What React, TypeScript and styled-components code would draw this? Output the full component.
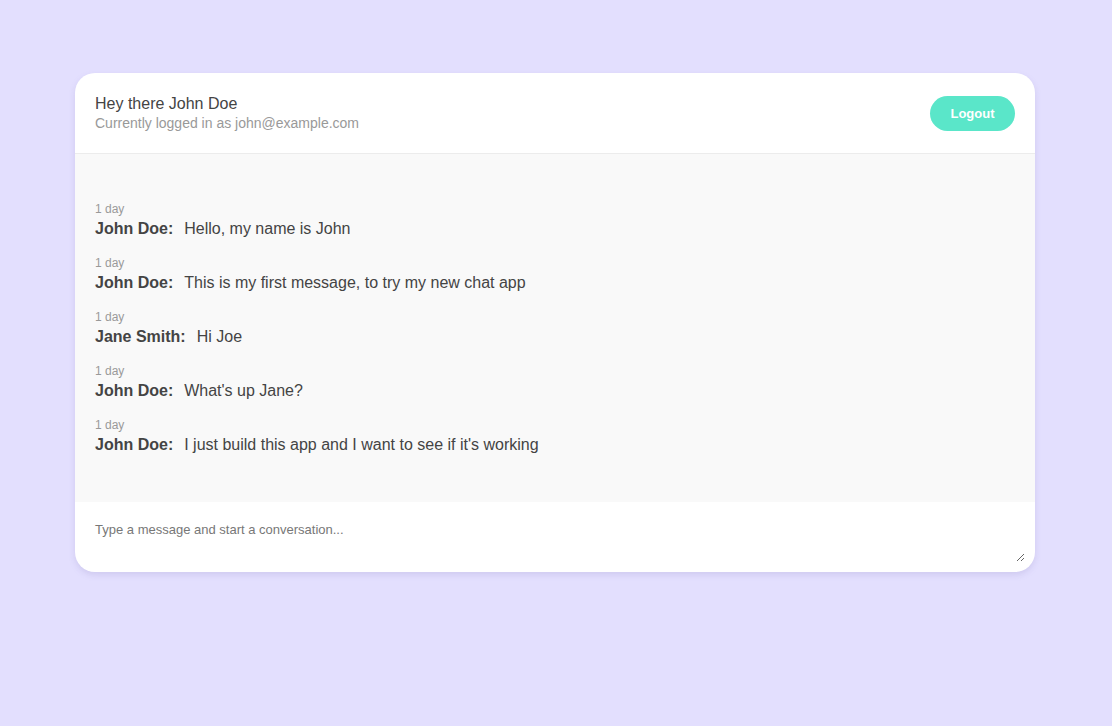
import React from "react";
import styled, { createGlobalStyle } from "styled-components";

const GlobalStyle = createGlobalStyle`
  html, body { margin: 0; padding: 0; }
  body {
    background: #e3dffe;
    font-family: "Liberation Sans", Arial, sans-serif;
    color: #444;
  }
`;

const Page = styled.div`
  min-height: 726px;
  padding: 73px 77px 0 75px;
  box-sizing: border-box;
  display: flex;
  justify-content: center;
  align-items: flex-start;
`;

const Card = styled.div`
  width: 960px;
  background: #fff;
  border-radius: 20px;
  overflow: hidden;
  box-shadow: 0 3px 6px rgba(120, 110, 180, 0.18);
  display: flex;
  flex-direction: column;
`;

const Header = styled.div`
  height: 80px;
  box-sizing: content-box;
  padding: 0 20px;
  display: flex;
  align-items: center;
  justify-content: space-between;
  border-bottom: 1px solid #ececec;
`;

const Greeting = styled.div`
  display: flex;
  flex-direction: column;
`;

const Title = styled.div`
  font-size: 16px;
  line-height: 21px;
  color: #444;
`;

const Subtitle = styled.div`
  font-size: 14px;
  line-height: 19px;
  color: #999;
`;

const LogoutButton = styled.button`
  width: 85px;
  height: 35px;
  border: none;
  border-radius: 18px;
  background: #5ae6c9;
  color: #fff;
  font-family: "Liberation Sans", Arial, sans-serif;
  font-weight: bold;
  font-size: 13px;
  cursor: pointer;
`;

const Messages = styled.div`
  background: #f9f9f9;
  padding: 48px 20px 30px;
  height: 348px;
  box-sizing: border-box;
  display: flex;
  flex-direction: column;
  gap: 14px;
`;

const Message = styled.div`
  display: flex;
  flex-direction: column;
`;

const Time = styled.div`
  font-size: 12px;
  line-height: 14px;
  color: #999;
`;

const Line = styled.div`
  font-size: 16px;
  line-height: 26px;
  color: #444;
`;

const Author = styled.span`
  font-weight: bold;
  margin-right: 11px;
`;

const Composer = styled.div`
  height: 70px;
  box-sizing: border-box;
  padding: 10px;
  display: flex;
`;

const Input = styled.textarea`
  flex: 1;
  height: 50px;
  box-sizing: border-box;
  border: none;
  outline: none;
  padding: 10px;
  font-family: "Liberation Sans", Arial, sans-serif;
  font-size: 13px;
  line-height: 15px;
  color: #444;
  background: #fff;
  &::placeholder {
    color: #777;
  }
`;

const messages = [
  { author: "John Doe", text: "Hello, my name is John" },
  { author: "John Doe", text: "This is my first message, to try my new chat app" },
  { author: "Jane Smith", text: "Hi Joe" },
  { author: "John Doe", text: "What's up Jane?" },
  { author: "John Doe", text: "I just build this app and I want to see if it's working" },
];

export default function App() {
  return (
    <>
      <GlobalStyle />
      <Page>
        <Card>
          <Header>
            <Greeting>
              <Title>Hey there John Doe</Title>
              <Subtitle>Currently logged in as john@example.com</Subtitle>
            </Greeting>
            <LogoutButton>Logout</LogoutButton>
          </Header>
          <Messages>
            {messages.map((m, i) => (
              <Message key={i}>
                <Time>1 day</Time>
                <Line>
                  <Author>{m.author}:</Author>
                  {m.text}
                </Line>
              </Message>
            ))}
          </Messages>
          <Composer>
            <Input placeholder="Type a message and start a conversation..." />
          </Composer>
        </Card>
      </Page>
    </>
  );
}
